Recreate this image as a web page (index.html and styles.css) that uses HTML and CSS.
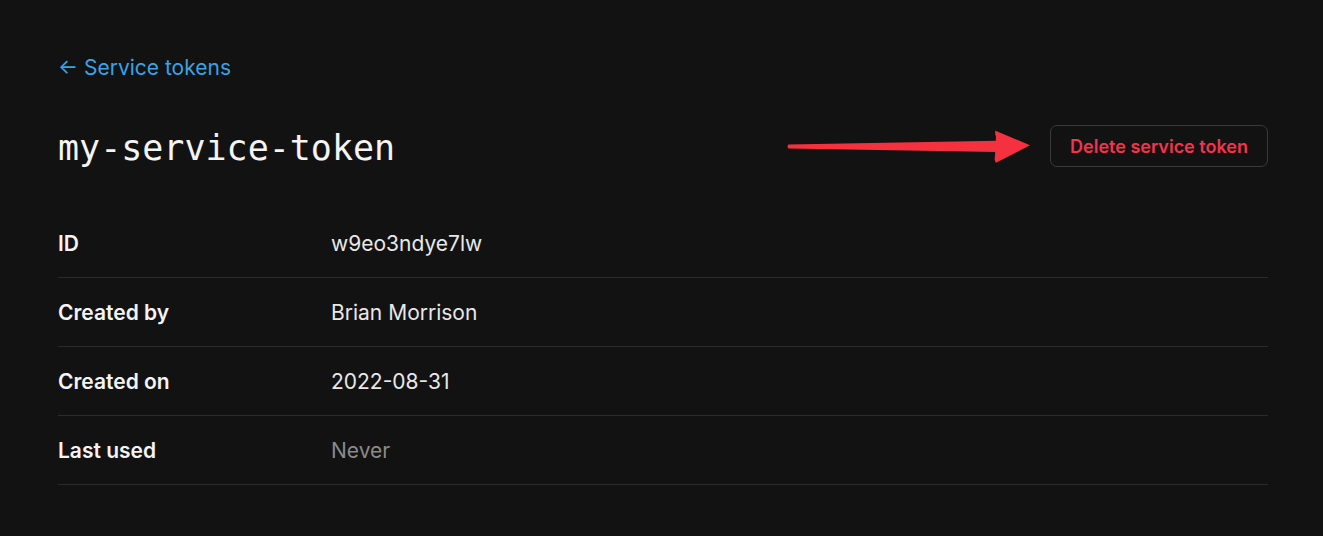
FILE: index.html
```html
<!DOCTYPE html>
<html>
<head>
<meta charset="utf-8">
<link rel="stylesheet" href="styles.css">
</head>
<body>
<main class="page">
  <a class="back" href="#"><span class="back-arrow">←</span> Service tokens</a>
  <div class="header">
    <h1 class="title">my-service-token</h1>
    <div class="actions">
      <svg class="annot" width="246" height="36" viewBox="0 0 246 36">
        <path d="M2.5 16.4 L211 12.7 L211 23.9 L2.5 20.6 Q0.5 18.5 2.5 16.4 Z" fill="#f5313f"/>
        <path d="M209.5 2.7 L244 17.2 L210 34.7 Q208 33 209 28 L210 9 Q208.5 4.5 209.5 2.7 Z" fill="#f5313f"/>
      </svg>
      <button class="btn-danger">Delete service token</button>
    </div>
  </div>
  <dl class="details">
    <div class="row"><dt>ID</dt><dd>w9eo3ndye7lw</dd></div>
    <div class="row"><dt>Created by</dt><dd>Brian Morrison</dd></div>
    <div class="row"><dt>Created on</dt><dd>2022-08-31</dd></div>
    <div class="row"><dt>Last used</dt><dd class="muted">Never</dd></div>
  </dl>
</main>
</body>
</html>
```
FILE: styles.css
```css
html, body {
  margin: 0;
  background: #121212;
}
body {
  font-family: Inter, "Noto Sans", sans-serif;
  color: #ececec;
}
.page {
  padding: 54px 55px 0 58px;
}
.back {
  display: inline-block;
  color: #39a3e6;
  text-decoration: none;
  font-size: 21px;
  line-height: 28px;
}
.header {
  display: flex;
  align-items: center;
  justify-content: space-between;
  margin-top: 42px;
  height: 44px;
}
.title {
  margin: 0;
  padding-top: 4px;
  font-family: "DejaVu Sans Mono", monospace;
  font-weight: normal;
  font-size: 35px;
  color: #f4f4f4;
}
.actions {
  display: flex;
  align-items: center;
  gap: 18px;
}
.annot {
  display: block;
}
.btn-danger {
  background: transparent;
  border: 1px solid #3a3a3a;
  border-radius: 7px;
  color: #f4344d;
  font-family: Inter, sans-serif;
  font-weight: 600;
  font-size: 18px;
  width: 218px;
  height: 42px;
  padding: 0;
}
.details {
  margin: 41px 0 0;
}
.row {
  display: flex;
  align-items: center;
  height: 68px;
  border-bottom: 1px solid #2b2b2b;
  font-size: 21px;
}
dt {
  width: 273px;
  font-weight: 600;
  color: #f4f4f4;
}
dd {
  margin: 0;
  color: #e8e8e8;
}
.muted {
  color: #8a8a8a;
}
```
